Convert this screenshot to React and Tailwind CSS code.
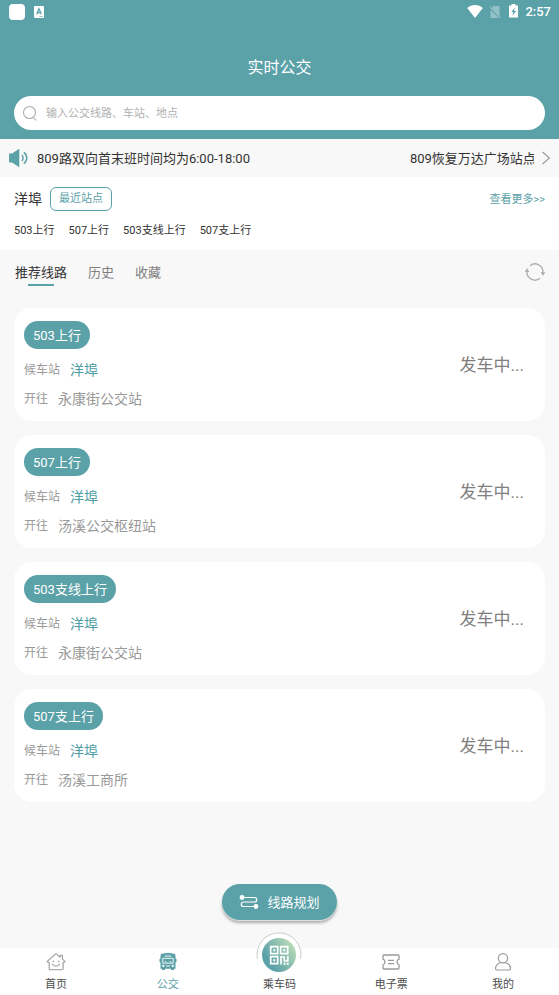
import { useState } from "react";

const stationLines = ["503上行", "507上行", "503支线上行", "507支上行"];

const tabs = ["推荐线路", "历史", "收藏"];

const routes = [
  { line: "503上行", station: "洋埠", to: "永康街公交站" },
  { line: "507上行", station: "洋埠", to: "汤溪公交枢纽站" },
  { line: "503支线上行", station: "洋埠", to: "永康街公交站" },
  { line: "507支上行", station: "洋埠", to: "汤溪工商所" },
];

function StatusBar() {
  return (
    <div className="flex h-6 items-center justify-between pr-2 pl-[9px] text-white">
      <div className="flex items-center gap-2">
        <span className="size-4 rounded bg-white" />
        <svg className="h-3 w-3" viewBox="0 0 12 12">
          <rect x="1" width="10" height="12" rx="1" fill="#fff" />
          <path d="M3.6 8.3 6 2.8l2.4 5.5M4.4 6.6h3.2" fill="none" stroke="#5aa1a8" strokeWidth="1.3" />
          <path d="M6.5 10.5H10" stroke="#5aa1a8" strokeWidth=".6" />
        </svg>
      </div>
      <div className="flex items-center gap-1.5">
        <svg className="h-4 w-4" viewBox="0 0 16 16" fill="#fff">
          <path d="M8 14 .2 3.900C2.200 2 5 1 8 1s5.800 1 7.800 2.900z" />
        </svg>
        <svg className="h-3 w-3" viewBox="0 0 12 12">
          <path d="M4 0h6.500v10.500L2.500 2zM1.500 3.500 9.800 12H1.500z" fill="#fff" opacity=".35" />
          <path d="M.5.5 11.500 12" stroke="#fff" strokeWidth=".8" opacity=".5" />
        </svg>
        <svg className="h-4 w-3" viewBox="0 0 12 16">
          <path d="M4.500 0h4v1.500H11v12H2v-12h2.500z" fill="#fff" />
          <path d="M8 3.500 4.300 8h2l-1 3.800L9.100 7h-2z" fill="#5aa1a8" />
        </svg>
        <span className="text-[13px] font-medium">2:57</span>
      </div>
    </div>
  );
}

function SpeakerIcon() {
  return (
    <svg className="h-5 w-5 shrink-0" viewBox="0 0 20 20">
      <path d="M0 5.500h3L10.300.7v18.600L3 14.500H0z" fill="#5aa1a8" />
      <path d="M12.800 7c1.700 1.300 1.700 4.700 0 6M14.800 4.300c4 2.900 4 8.500 0 11.400" fill="none" stroke="#5aa1a8" strokeWidth="1.5" />
    </svg>
  );
}

function RefreshIcon() {
  return (
    <svg className="h-5 w-5" viewBox="0 0 20 20" fill="none" stroke="#b0b0b0" strokeWidth="1.400">
      <path d="M5 2.700A8 8 0 0 1 18 9.500M15 15.300A8 8 0 0 1 2 8.500" />
      <path d="m15.700 9 2.300 4L20.300 9zM-.3 9 2 5l2.300 4z" fill="#b0b0b0" stroke="none" />
    </svg>
  );
}

function HomeIcon() {
  return (
    <svg className="h-5 w-5" viewBox="0 0 20 20" fill="none" stroke="#999" strokeWidth="1.1" strokeLinejoin="round" strokeLinecap="round">
      <path d="M3.200 10.300H2c-.8 0-1-.7-.5-1.200L9.400 2.200c.4-.4.900-.4 1.300 0l3.400 2.900V3.300h2.300v3.900l2.200 1.900c.6.500.3 1.200-.4 1.200h-1.100v6.300c0 .800-.5 1.200-1.200 1.200H4.400c-.7 0-1.200-.4-1.200-1.200z" />
      <path d="M6.500 12.300c1.400 2.500 5.600 2.500 7 0" />
      <path d="M7.300 9.200v.4M12.700 9.200v.4" strokeWidth="1.4" />
    </svg>
  );
}

function BusIcon() {
  return (
    <svg className="h-5 w-5" viewBox="0 0 20 20">
      <path d="M4 1.800C7 .8 13 .8 16 1.800c1 .3 1.500 1 1.500 2V6.500l1 .5v3l-1 .4v6.300h-1.500V18h-3v-1.300H7V18H4v-1.300H2.500v-6.300l-1-.4V7l1-.5V3.800c0-1 .500-1.700 1.500-2z" fill="#5aa1a8" />
      <path d="M7 4h6" stroke="#fff" strokeWidth=".9" />
      <path d="M4.800 6.300h10.400v4.900H4.800z" fill="none" stroke="#fff" strokeWidth=".9" />
      <path d="m7 9 1.500 1.500M11.500 9l1.500 1.500" stroke="#fff" strokeWidth=".9" />
      <circle cx="5.300" cy="13.900" r="1.100" fill="#fff" />
      <circle cx="14.700" cy="13.900" r="1.100" fill="#fff" />
      <path d="M8 14h4" stroke="#fff" strokeWidth=".9" />
    </svg>
  );
}

function TicketIcon() {
  return (
    <svg className="h-5 w-5" viewBox="0 0 20 20" fill="none" stroke="#999" strokeWidth="1.300" strokeLinejoin="round">
      <path d="M3 3h14c.6 0 1 .4 1 1v3.200c-2.600.8-2.600 4.800 0 5.600V16c0 .6-.4 1-1 1H3c-.6 0-1-.4-1-1v-3.200c2.600-.8 2.600-4.800 0-5.600V4c0-.6.4-1 1-1z" />
      <path d="M7 8.300h6M7 11.700h6" />
    </svg>
  );
}

function UserIcon() {
  return (
    <svg className="h-5 w-5" viewBox="0 0 20 20" fill="none" stroke="#999" strokeWidth="1.200">
      <circle cx="10" cy="6.200" r="4.600" />
      <path d="M7.500 10.800c-3 .9-5 3.200-5 5.700 0 .9.500 1.500 1.400 1.500h12.200c.9 0 1.400-.6 1.400-1.500 0-2.500-2-4.800-5-5.700" />
    </svg>
  );
}

function QrIcon() {
  return (
    <svg className="-mt-[21px] -mb-[7px] h-12 w-12" viewBox="0 0 48 48">
      <defs>
        <linearGradient id="qr" x1=".1" y1=".7" x2=".9" y2=".15">
          <stop offset=".1" stopColor="#5aa1a8" />
          <stop offset="1" stopColor="#b9dbb8" />
        </linearGradient>
      </defs>
      <circle cx="24" cy="24" r="22" fill="#fff" />
      <path d="M2.400 28a22 22 0 1 1 43.200 0" fill="none" stroke="#ccc" strokeWidth="1" />
      <circle cx="24" cy="24" r="17" fill="url(#qr)" />
      <g fill="none" stroke="#fff" strokeWidth="1.700">
        <path d="M15.700 15.700h7v7h-7zM25.700 15.700h7v7h-7zM15.700 25.700h7v7h-7zM26 25v8.500M26 26h3.300v4h3.500v-5" />
      </g>
      <path d="M18.200 18.200h2v2h-2zM28.200 18.200h2v2h-2zM18.200 28.200h2v2h-2zM28.500 31.700h2v2h-2zM31.700 31.700h2v2h-2z" fill="#fff" />
    </svg>
  );
}

function RouteCard({ line, station, to }) {
  return (
    <li className="flex items-center justify-between rounded-[18px] bg-white pt-[13px] pr-[21px] pb-[10px] pl-[10px]">
      <div>
        <div className="flex">
          <span className="h-7 rounded-full bg-[#5aa1a8] px-[9px] text-[13px] leading-[30px] text-white">{line}</span>
        </div>
        <p className="mt-2 flex items-center gap-[10px]">
          <span className="pt-px text-xs leading-6 text-[#999]">候车站</span>
          <span className="text-sm leading-6 text-[#4d9da5]">{station}</span>
        </p>
        <p className="mt-1 flex items-center gap-[10px]">
          <span className="pt-px text-xs leading-6 text-[#999]">开往</span>
          <span className="text-sm leading-6 text-[#999]">{to}</span>
        </p>
      </div>
      <span className="text-[17px] text-[#808080]">发车中...</span>
    </li>
  );
}

export default function App() {
  const [tab, setTab] = useState("推荐线路");
  const [keyword, setKeyword] = useState("");

  return (
    <div className="flex min-h-screen flex-col bg-[#f8f8f8] font-['Roboto','Noto_Sans_CJK_SC',sans-serif] text-[#333]">
      <header className="bg-[#5aa1a8] pb-[9px]">
        <StatusBar />
        <h1 className="pt-8 text-center text-base leading-6 text-white">实时公交</h1>
        <label className="mx-[14px] mt-4 flex h-[34px] items-center gap-2 rounded-full bg-white pl-2">
          <svg className="h-4 w-4 shrink-0" viewBox="0 0 16 16" fill="none" stroke="#b0b0b0" strokeWidth="1.100">
            <circle cx="7.500" cy="7.500" r="6" />
            <path d="m11.500 12.500 2.500 2.800" />
          </svg>
          <input
            type="text"
            aria-label="搜索"
            placeholder="输入公交线路、车站、地点"
            value={keyword}
            onChange={(e) => setKeyword(e.target.value)}
            className="min-w-0 flex-1 pt-0.5 text-[11px] outline-none placeholder:text-[#b0b0b0]"
          />
        </label>
      </header>

      <section className="flex h-[38px] items-center pr-[9px] pl-[9px]">
        <SpeakerIcon />
        <div className="ml-2 flex flex-1 gap-40 overflow-hidden pt-0.5 text-[13px] whitespace-nowrap">
          <span>809路双向首末班时间均为6:00-18:00</span>
          <span>809恢复万达广场站点</span>
        </div>
        <svg className="ml-2 h-4 w-2 shrink-0" viewBox="0 0 8 16" fill="none" stroke="#999" strokeWidth="1.200">
          <path d="m.5 2 7 6-7 6" />
        </svg>
      </section>

      <section className="bg-white px-[14px] pt-[10px] pb-[9px]">
        <div className="flex items-center justify-between">
          <div className="flex items-center gap-2">
            <h2 className="text-sm">洋埠</h2>
            <button className="h-6 rounded-md border border-[#5aa1a8] px-2 pt-px text-[11px] text-[#5aa1a8]">最近站点</button>
          </div>
          <a href="#more" className="pt-0.5 text-[11px] text-[#5aa1a8]">查看更多&gt;&gt;</a>
        </div>
        <ul className="mt-[10px] flex gap-[14px] text-[11px] leading-5">
          {stationLines.map((name) => (
            <li key={name}>{name}</li>
          ))}
        </ul>
      </section>

      <div className="flex items-start justify-between pt-[13px] pr-[14px] pl-[15px]">
        <div className="flex gap-[21px] text-[13px] leading-5">
          {tabs.map((name) => (
            <button
              key={name}
              onClick={() => setTab(name)}
              className={tab === name ? "flex flex-col items-center text-[#333]" : "flex flex-col items-center text-[#808080]"}
            >
              {name}
              {tab === name && <span className="mt-px h-0.5 w-[26px] bg-[#5aa1a8]" />}
            </button>
          ))}
        </div>
        <button aria-label="刷新">
          <RefreshIcon />
        </button>
      </div>

      <ul className="mt-[22px] flex flex-col gap-[14px] px-[14px]">
        {routes.map((route) => (
          <RouteCard key={route.line} {...route} />
        ))}
      </ul>

      <button className="mx-auto mt-auto mb-7 flex h-9 items-center gap-2 rounded-full bg-[#5aa1a8] px-[17px] text-[13px] leading-5 text-white shadow-[0_1px_1px_#e5e5e5,0_3px_3px_#aaa]">
        <svg className="h-5 w-5" viewBox="0 0 20 20" fill="none" stroke="#fff" strokeWidth="1.200">
          <path d="M3 5.500h12.500a2.200 2.200 0 0 1 0 4.500H4.500a2.200 2.200 0 0 0 0 4.500H17" />
          <circle cx="3" cy="5.500" r="1.800" fill="#fff" />
          <circle cx="17" cy="14.500" r="1.800" fill="#fff" />
        </svg>
        <span className="pt-0.5">线路规划</span>
      </button>

      <nav className="grid grid-cols-5 bg-white pt-1 pb-0.5 text-[11px] leading-[17px] text-[#4d4d4d]">
        <a href="#home" className="flex flex-col items-center gap-1">
          <HomeIcon />
          首页
        </a>
        <a href="#bus" className="flex flex-col items-center gap-1 text-[#5aa1a8]">
          <BusIcon />
          公交
        </a>
        <a href="#code" className="flex flex-col items-center gap-1">
          <QrIcon />
          乘车码
        </a>
        <a href="#ticket" className="flex flex-col items-center gap-1">
          <TicketIcon />
          电子票
        </a>
        <a href="#mine" className="flex flex-col items-center gap-1">
          <UserIcon />
          我的
        </a>
      </nav>
    </div>
  );
}
